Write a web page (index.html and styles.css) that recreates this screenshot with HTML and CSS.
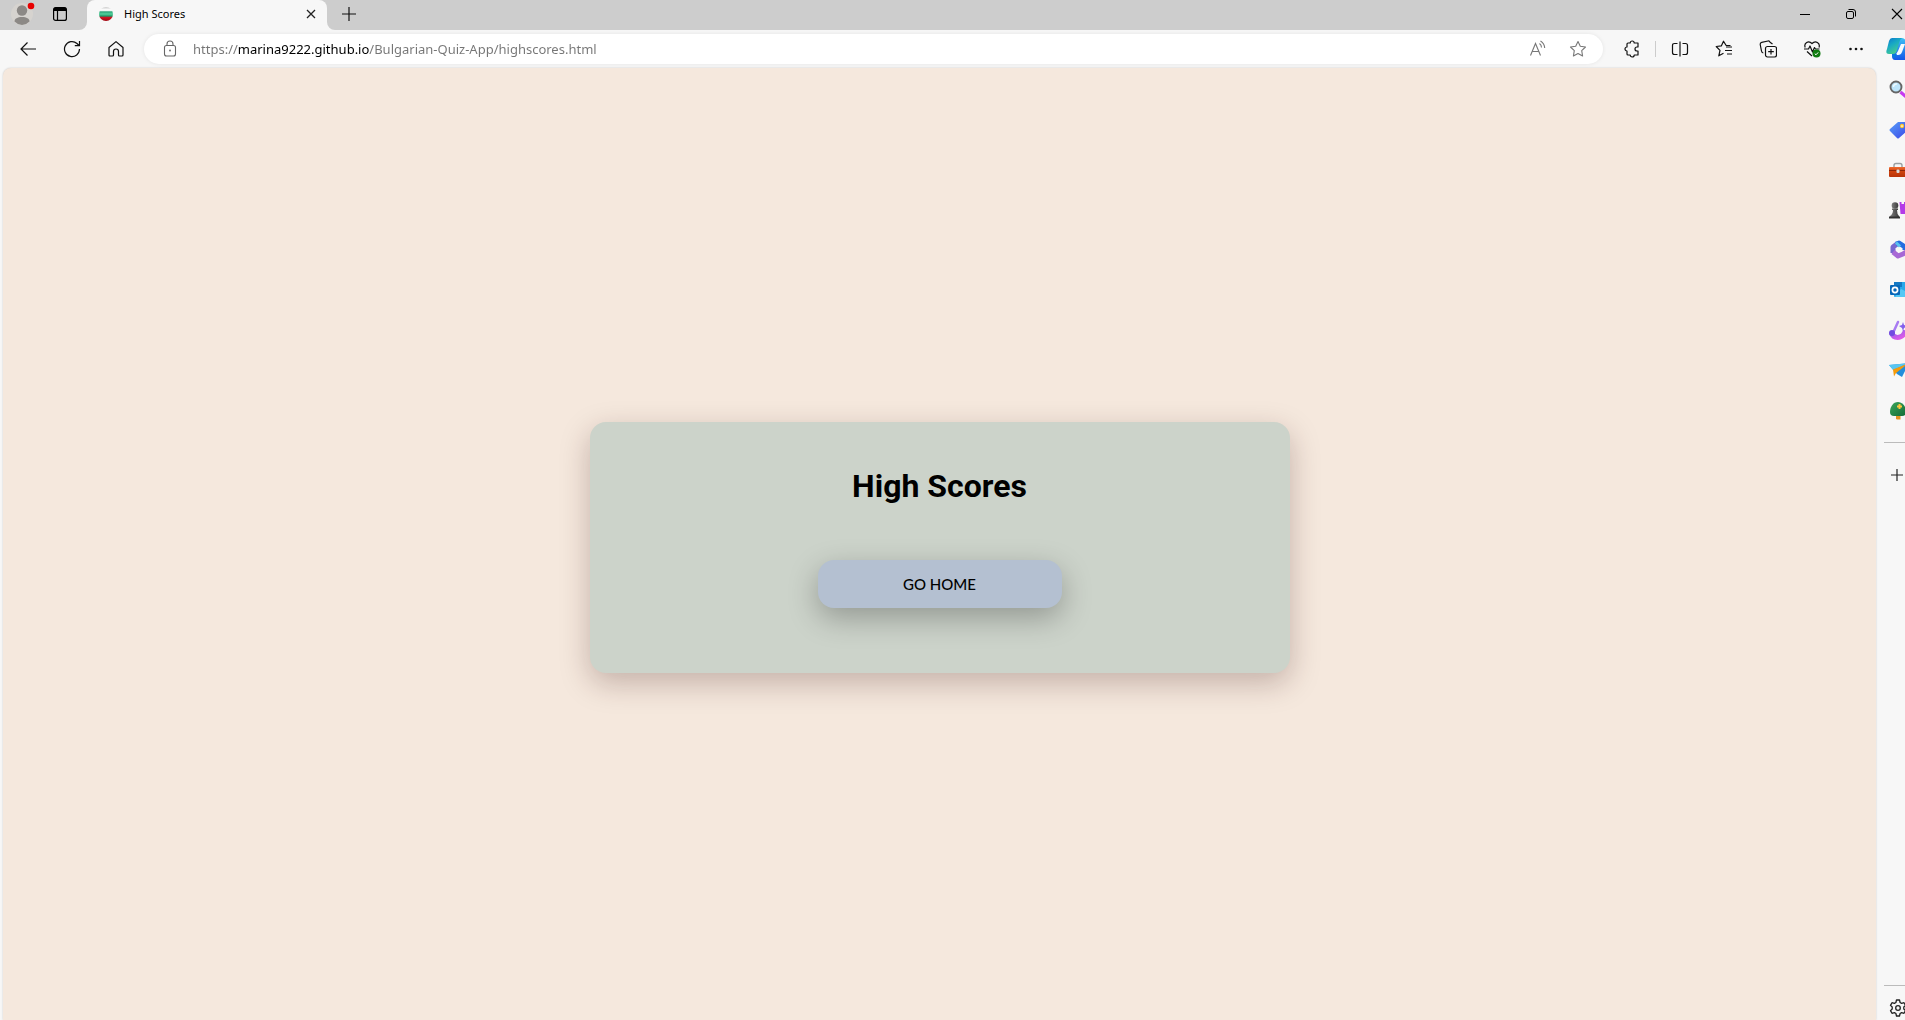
FILE: index.html
```html
<!DOCTYPE html>
<html lang="en">
<head>
<meta charset="utf-8">
<title>High Scores</title>
<link rel="stylesheet" href="styles.css">
</head>
<body>
<div class="browser">
  <header class="tabs">
    <div class="tabs-start">
      <button class="profile" aria-label="Profile">
        <svg width="24" height="26" viewBox="0 0 24 26"><circle cx="11" cy="14" r="11" fill="#d6d3cf"/><circle cx="11" cy="10.500" r="5.200" fill="#8c8986"/><path d="M3.500 21.500c0-3 3-4.500 7.500-4.500s7.500 1.500 7.500 4.500A11 11 0 0 1 11 25a11 11 0 0 1-7.500-3.500z" fill="#8c8986"/><circle cx="20" cy="6" r="3.300" fill="#e80000"/></svg>
      </button>
      <button class="tab-menu" aria-label="Tab actions">
        <svg width="16" height="16" viewBox="0 0 16 16" fill="none" stroke="#000" stroke-width="1.200"><rect x="1.600" y="1.600" width="12.800" height="12.800" rx="2"/><path d="M2 3.400h12" stroke-width="3.200"/><path d="M5.500 4v10"/></svg>
      </button>
    </div>
    <div class="tab-slot">
      <div class="tab">
        <svg width="14" height="14" viewBox="0 0 14 14"><defs><linearGradient id="flag" x2="0" y2="1"><stop offset="0" stop-color="#c9c9c9"/><stop offset=".2" stop-color="#fff"/><stop offset=".28" stop-color="#e5f3ec"/><stop offset=".34" stop-color="#2aa377"/><stop offset=".5" stop-color="#55d39c"/><stop offset=".66" stop-color="#1a9263"/><stop offset=".72" stop-color="#d01824"/><stop offset="1" stop-color="#a00812"/></linearGradient></defs><circle cx="7" cy="7" r="7" fill="url(#flag)"/></svg>
        <span class="tab-title">High Scores</span>
        <button class="tab-close" aria-label="Close tab"><svg width="10" height="10" viewBox="0 0 10 10" stroke="#222" stroke-width="1.300"><path d="M1 1l8 8M9 1L1 9"/></svg></button>
      </div>
    </div>
    <div class="tabs-end">
      <button class="new-tab" aria-label="New tab"><svg width="14" height="14" viewBox="0 0 14 14" stroke="#111" stroke-width="1.200"><path d="M7 0v14M0 7h14"/></svg></button>
      <div class="window-controls">
        <button aria-label="Minimize"><svg width="10" height="12" viewBox="0 0 10 12" stroke="#000"><path d="M0 6.500h10"/></svg></button>
        <button aria-label="Restore"><svg width="12" height="12" viewBox="0 0 12 12" fill="none" stroke="#000"><rect x="1.500" y="3.500" width="7" height="7" rx="1.500"/><path d="M3.500 1.500H8a2.500 2.500 0 0 1 2.500 2.500v4.500"/></svg></button>
        <button class="window-close" aria-label="Close"><svg width="12" height="12" viewBox="0 0 12 12" stroke="#000" stroke-width="1.100"><path d="M1 1l10 10M11 1L1 11"/></svg></button>
      </div>
    </div>
  </header>

  <nav class="toolbar" aria-label="Navigation">
    <button class="tool" aria-label="Back"><svg width="18" height="18" viewBox="0 0 18 18" fill="none" stroke="#111" stroke-width="1.200"><path d="M17 9H2M8.500 2.500L2 9l6.500 6.500"/></svg></button>
    <button class="tool" aria-label="Refresh"><svg width="18" height="18" viewBox="0 0 18 18" fill="none" stroke="#111" stroke-width="1.200"><path d="M16.500 9A7.500 7.500 0 1 1 14 3.500l2 2M16.500 1v4.700h-4.700"/></svg></button>
    <button class="tool" aria-label="Home"><svg width="18" height="18" viewBox="0 0 18 18" fill="none" stroke="#111" stroke-width="1.200" stroke-linejoin="round"><path d="M2 7.500L9 1.600l7 5.900V15q0 1-1 1h-2.500q-1 0-1-1v-3.500a2.500 2.500 0 0 0-5 0V15q0 1-1 1H3q-1 0-1-1z"/></svg></button>
    <div class="address">
      <svg class="lock" width="20" height="20" viewBox="0 0 20 20" fill="none" stroke="#666" stroke-width="1.100"><rect x="4.500" y="6.500" width="11" height="10.500" rx="2"/><path d="M7 6.500V5a3 3 0 0 1 6 0v1.500"/><circle cx="10" cy="11.500" r=".9" fill="#666" stroke="none"/></svg>
      <input class="url" type="text" aria-label="Address" spellcheck="false" value="https://marina9222.github.io/Bulgarian-Quiz-App/highscores.html">
      <button aria-label="Read aloud"><svg width="18" height="18" viewBox="0 0 18 18" fill="none" stroke="#777" stroke-width="1.100"><path d="M1.500 15.500L6.500 3.500l5 12M3.300 11.500h6.400M10.500 3.500q2 1.500 2 4M11.500 1q4 2.500 4.200 7"/></svg></button>
      <button aria-label="Add to favorites"><svg width="18" height="18" viewBox="0 0 18 18" fill="none" stroke="#777" stroke-width="1.100" stroke-linejoin="round"><path d="M9 1.500l2.300 4.800 5.200.7-3.800 3.700.9 5.300L9 13.500 4.400 16l.9-5.300L1.500 7l5.200-.7z"/></svg></button>
    </div>
    <button class="tool" aria-label="Extensions"><svg width="18" height="18" viewBox="0 0 18 18" fill="none" stroke="#111" stroke-width="1.200" stroke-linejoin="round"><path d="M5 3h2.200a2 2 0 0 1 4 0H15v4h-1a2 2 0 0 0 0 4h1v4h-3.800a2 2 0 0 1-4 0H5q-1 0-1-1v-3a2 2 0 0 1 0-4V4q0-1 1-1z"/></svg></button>
    <span class="divider"></span>
    <button class="tool" aria-label="Split screen"><svg width="18" height="18" viewBox="0 0 18 18" fill="none" stroke="#111" stroke-width="1.200"><path d="M6.500 3.500h-3Q1.500 3.500 1.500 5.500v7q0 2 2 2h3M11.500 3.500h3q2 0 2 2v7q0 2-2 2h-3M9 1.500v15"/></svg></button>
    <button class="tool" aria-label="Favorites"><svg width="18" height="18" viewBox="0 0 18 18" fill="none" stroke="#111" stroke-width="1.200" stroke-linejoin="round"><path d="M10 10.500h7M11 7h6M12 14h5M15.500 5.500l-4.500-.2L8.500 1.200 6.300 5.900 1.200 6.500 5 10.300l-1.200 5.500 4.700-2.500"/></svg></button>
    <button class="tool" aria-label="Collections"><svg width="18" height="18" viewBox="0 0 18 18" fill="none" stroke="#111" stroke-width="1.200" stroke-linejoin="round"><rect x="6.500" y="6.500" width="11" height="10.500" rx="2"/><path d="M12 9v5.500M9.200 11.700h5.600M4.300 13Q2.800 12.700 2.500 11L1.200 4.500Q1 2.700 2.700 2.300L9 1q1.600-.2 2 1.200L13.500 4"/></svg></button>
    <button class="tool" aria-label="Browser essentials"><svg width="18" height="18" viewBox="0 0 18 18" fill="none" stroke="#111" stroke-width="1.200" stroke-linejoin="round"><path d="M2.200 7.500C.5 3 5.500-.2 9 3.500c3.500-3.700 8.500-.5 7 4M4 11.500l5 4.500M1 9h4.500l1.500-3 2.500 6 2-4.500 1 1.500h4"/><circle cx="13.500" cy="13.500" r="4" fill="#107c10" stroke="none"/><path d="M11.800 13.700l1.200 1.100 2.200-2.400" stroke="#fff" stroke-width="1"/></svg></button>
    <button class="tool" aria-label="Settings and more"><svg width="18" height="18" viewBox="0 0 18 18" fill="#111"><circle cx="3.500" cy="9" r="1.300"/><circle cx="9" cy="9" r="1.300"/><circle cx="14.500" cy="9" r="1.300"/></svg></button>
    <button class="edge-button" aria-label="Copilot"><svg width="24" height="24" viewBox="0 0 24 24"><defs><linearGradient id="cp1" x2=".6" y2="1"><stop stop-color="#0b73d0"/><stop offset=".45" stop-color="#18a9c4"/><stop offset="1" stop-color="#49cf8b"/></linearGradient><linearGradient id="cp2" x2="0" y2="1"><stop stop-color="#3dbff5"/><stop offset="1" stop-color="#1456e8"/></linearGradient></defs><path d="M7 1h9q3 0 4 4l4 3v12q-1 3-4 3H9q-3 0-3-4z" fill="url(#cp2)"/><path d="M6 1h10q-2 1-3 5l-2 7q-1 4-4 4H3q-4 0-2-5L3 4q1-3 3-3z" fill="url(#cp1)"/><path d="M15 7h4l-3 8q-1 3-4 3H8q3-1 4-4z" fill="#f4fbff"/><path d="M6 17h5q-2 5-4 4z" fill="#0877dc"/></svg></button>
  </nav>

  <div class="content">
    <main class="page">
      <section class="card">
        <h1>High Scores</h1>
        <a class="home-button" href="#">GO HOME</a>
      </section>
    </main>

    <aside class="sidebar" aria-label="Sidebar">
      <button class="edge-button" aria-label="Search"><svg width="20" height="20" viewBox="0 0 20 20"><path d="M11.500 12l7 6" stroke="#c73af0" stroke-width="3.200"/><circle cx="7" cy="7" r="5.500" fill="#bde5fb" stroke="#666" stroke-width="1.900"/><path d="M4.500 7A3 3 0 0 1 8 4" stroke="#eefaff" stroke-width="1.500" fill="none"/></svg></button>
      <button class="edge-button" aria-label="Shopping"><svg width="20" height="20" viewBox="0 0 20 20"><defs><linearGradient id="tag" x2="1" y2="1"><stop stop-color="#579ff8"/><stop offset="1" stop-color="#3b45e8"/></linearGradient></defs><path d="M9 2h8q2 0 2 2v6l-9 8q-1 1-2 0L1 11q-1-1 0-2z" fill="url(#tag)"/><circle cx="13" cy="6" r="1.500" fill="#fff" stroke="#ffc62d" stroke-width="1.300"/></svg></button>
      <button class="edge-button" aria-label="Tools"><svg width="20" height="20" viewBox="0 0 20 20"><defs><linearGradient id="box" x2="0" y2="1"><stop stop-color="#ef6b30"/><stop offset=".4" stop-color="#d0440f"/><stop offset="1" stop-color="#b83208"/></linearGradient></defs><path d="M5 7V5.500q0-2 2-2h4q2 0 2 2V7" fill="none" stroke="#9aa0a2" stroke-width="1.400"/><rect y="7" width="20" height="10" rx="1" fill="url(#box)"/><path d="M0 10.500h20" stroke="#8c2608"/><rect x="7.500" y="9.500" width="3" height="3.500" rx="1" fill="#d7dddf"/></svg></button>
      <button class="edge-button" aria-label="Games"><svg width="20" height="20" viewBox="0 0 20 20"><defs><linearGradient id="pawn"><stop stop-color="#7c7c7c"/><stop offset="1" stop-color="#3c3c3c"/></linearGradient></defs><path d="M10.500 2h2v2H15V2h3v2h3v10h-9.500z" fill="#b43be7"/><circle cx="6" cy="5.500" r="3.300" fill="url(#pawn)"/><path d="M3 8.500h6V10H8q0 4 2 6v2H1v-2q3-2 3-6H3z" fill="url(#pawn)"/><path d="M0 16.500h11v2H0z" fill="#303030"/></svg></button>
      <button class="edge-button" aria-label="Microsoft 365"><svg width="20" height="20" viewBox="0 0 20 20" fill="none" stroke-width="5" stroke-linejoin="round"><path d="M4 13V7l4-3" stroke="#7767cf"/><path d="M7 4l3-1 6 4v3" stroke="#246ce0"/><path d="M4 12l5 4 5-2 3-2" stroke="#a768d5"/><path d="M7 2.500l4 4" stroke="#59c2ee" stroke-width="3"/></svg></button>
      <button class="edge-button" aria-label="Outlook"><svg width="20" height="20" viewBox="0 0 20 20"><rect x="5" y="2" width="15" height="15" rx="1" fill="#28a8ea"/><path d="M5 2h8v5H5z" fill="#1479c4"/><path d="M12 9l8 4v4H6z" fill="#56c8f4"/><rect x="1" y="5" width="10" height="10" rx="1" fill="#0867b8"/><circle cx="6" cy="10" r="2.600" fill="none" stroke="#fff" stroke-width="1.700"/></svg></button>
      <button class="edge-button" aria-label="Designer"><svg width="20" height="20" viewBox="0 0 20 20"><defs><linearGradient id="drop" x2="1" y2="1"><stop stop-color="#8a5cf0"/><stop offset="1" stop-color="#e65be6"/></linearGradient></defs><path d="M2.500 13q1.500 4.500 6 4.500 6 0 8-7" fill="none" stroke="url(#drop)" stroke-width="5"/><path d="M9 2L4 13" stroke="#a77bf2" stroke-width="2.500" stroke-linecap="round"/><circle cx="3" cy="13" r="3" fill="#704be0"/><path d="M14 2l1 3 4 1-4 2-1 3-1-3-3-2 3-1z" fill="#8460ed"/></svg></button>
      <button class="edge-button" aria-label="Drop"><svg width="20" height="20" viewBox="0 0 20 20"><path d="M0 5l20-2-7 14-5-3z" fill="#238edb"/><path d="M0 5l20-2L4 10z" fill="#58c6f2"/><path d="M4 9.500L20 3 7 13l-2 3.500z" fill="#f49b0b"/></svg></button>
      <button class="edge-button" aria-label="Tree planting"><svg width="20" height="20" viewBox="0 0 20 20"><defs><linearGradient id="leaf" x2="1" y2="1"><stop stop-color="#3aa65a"/><stop offset="1" stop-color="#156b38"/></linearGradient></defs><path d="M7 13h4v6H7z" fill="#e39320"/><path d="M9 2C14 2 17 7 17 12q0 4-4 4H5q-4 0-4-4C1 7 4 2 9 2z" fill="url(#leaf)"/><path d="M7.500 16h4v3.500h-4z" fill="#e39320"/><path d="M10.500 4v5M8 6.500h5" stroke="#ffc83d" stroke-width="2"/></svg></button>
      <span class="rule"></span>
      <button class="edge-button add" aria-label="Customize sidebar"><svg width="16" height="16" viewBox="0 0 16 16" stroke="#222" stroke-width="1.200"><path d="M8 2v12M2 8h12"/></svg></button>
      <div class="sidebar-end">
        <span class="rule"></span>
        <button class="edge-button" aria-label="Sidebar settings"><svg width="18" height="18" viewBox="0 0 18 18" fill="none" stroke="#222" stroke-width="1.300" stroke-linejoin="round"><path d="M7.500 1h3l.6 2.500 1.500.9L15 3.700 16.500 6.400 14.800 8v2l1.700 1.600-1.500 2.700-2.400-.7-1.500.9-.6 2.500h-3l-.6-2.500-1.500-.9-2.400.7-1.500-2.700L3.200 10V8L1.500 6.400 3 3.700l2.400.7 1.500-.9z"/><circle cx="9" cy="9" r="2.300"/></svg></button>
      </div>
    </aside>
  </div>
</div>
</body>
</html>
```
FILE: styles.css
```css
* {
  box-sizing: border-box;
}

body {
  margin: 0;
  font-family: "Noto Sans", "Open Sans", sans-serif;
  color: #000;
}

button {
  display: flex;
  align-items: center;
  justify-content: center;
  flex: none;
  padding: 0;
  border: 0;
  background: none;
}

svg {
  display: block;
  flex: none;
}

.browser {
  display: flex;
  flex-direction: column;
  height: 100vh;
  overflow: hidden;
  background: #f7f7f7;
}

/* Tab strip */
.tabs {
  display: flex;
  flex: none;
  height: 30px;
}

.tabs-start {
  display: flex;
  align-items: flex-start;
  gap: 17px;
  width: 87px;
  padding-left: 11px;
  background: #cdcdcd;
  border-bottom-right-radius: 8px;
}

.tab-menu {
  height: 28px;
}

.tab-slot {
  width: 240px;
  background: #cdcdcd;
}

.tab {
  display: flex;
  align-items: center;
  height: 30px;
  padding: 0 6px 2px 12px;
  background: #f7f7f7;
  border-radius: 8px 8px 0 0;
}

.tab-title {
  flex: 1;
  margin-left: 11px;
  font-size: 11px;
  line-height: 16px;
}

.tab-close {
  width: 20px;
  height: 20px;
}

.tabs-end {
  display: flex;
  flex: 1;
  justify-content: space-between;
  padding: 0 0 2px 15px;
  background: #cdcdcd;
  border-bottom-left-radius: 8px;
}

.window-controls {
  display: flex;
}

.window-controls button {
  width: 46px;
}

.window-controls .window-close {
  justify-content: flex-start;
  width: 31px;
  padding-left: 17px;
}

/* Toolbar */
.toolbar {
  display: flex;
  align-items: center;
  flex: none;
  height: 37px;
  padding-left: 6px;
}

.tool {
  width: 44px;
  height: 30px;
}

.address {
  display: flex;
  align-items: center;
  flex: 1;
  height: 30px;
  margin: 0 7px 0 6px;
  padding: 0 5px 0 16px;
  background: #fff;
  border-radius: 15px;
  box-shadow: 0 0 4px rgba(0, 0, 0, 0.08);
}

.address button {
  width: 40px;
  height: 30px;
}

/* The host name is black, the rest of the address grey */
.url {
  flex: 1;
  min-width: 0;
  height: 22px;
  margin-left: 13px;
  padding: 0;
  border: 0;
  outline: 0;
  font: 13px/22px "Noto Sans", "Open Sans", sans-serif;
  color: transparent;
  background: linear-gradient(90deg, #757575 45px, #000 45px, #000 176px, #757575 176px);
  -webkit-background-clip: text;
  background-clip: text;
}

.divider {
  width: 1px;
  height: 16px;
  margin: 0 2px 0 1px;
  background: #ccc;
}

.edge-button {
  justify-content: flex-start;
  width: 28px;
  height: 40px;
  padding-left: 12px;
  overflow: hidden;
}

.toolbar .edge-button {
  width: 27px;
  height: 37px;
  padding-left: 8px;
}

/* Page and sidebar */
.content {
  display: flex;
  flex: 1;
  min-height: 0;
}

.page {
  display: flex;
  align-items: center;
  justify-content: center;
  flex: 1;
  margin: 1px 1px 0 3px;
  padding-top: 7px;
  background: #f5e8dd;
  border-radius: 8px 8px 0 0;
  box-shadow: 0 0 2px rgba(0, 0, 0, 0.2);
}

.card {
  display: flex;
  flex-direction: column;
  align-items: center;
  gap: 50px;
  width: 700px;
  max-width: 90%;
  padding: 40px 32px 65px;
  background: #ccd3ca;
  border-radius: 16px;
  box-shadow: 0 10px 30px rgba(50, 10, 10, 0.25);
}

h1 {
  margin: 0;
  font: 700 32px/48px Roboto, sans-serif;
}

.home-button {
  width: 244px;
  border-radius: 16px;
  background: #b4c0d1;
  box-shadow: 0 10px 30px rgba(0, 0, 0, 0.28);
  color: #000;
  font: 500 15px/48px Lato, sans-serif;
  text-align: center;
  text-decoration: none;
}

.sidebar {
  display: flex;
  flex-direction: column;
  flex: none;
  width: 28px;
  padding-top: 3px;
}

.rule {
  display: block;
  flex: none;
  height: 1px;
  margin-left: 7px;
  background: #bbb;
}

.sidebar > .rule {
  margin-top: 12px;
}

.add {
  height: 64px;
}

.sidebar-end {
  margin-top: auto;
}

.sidebar-end .edge-button {
  align-items: flex-start;
  height: 34px;
  padding-top: 13px;
}
```
